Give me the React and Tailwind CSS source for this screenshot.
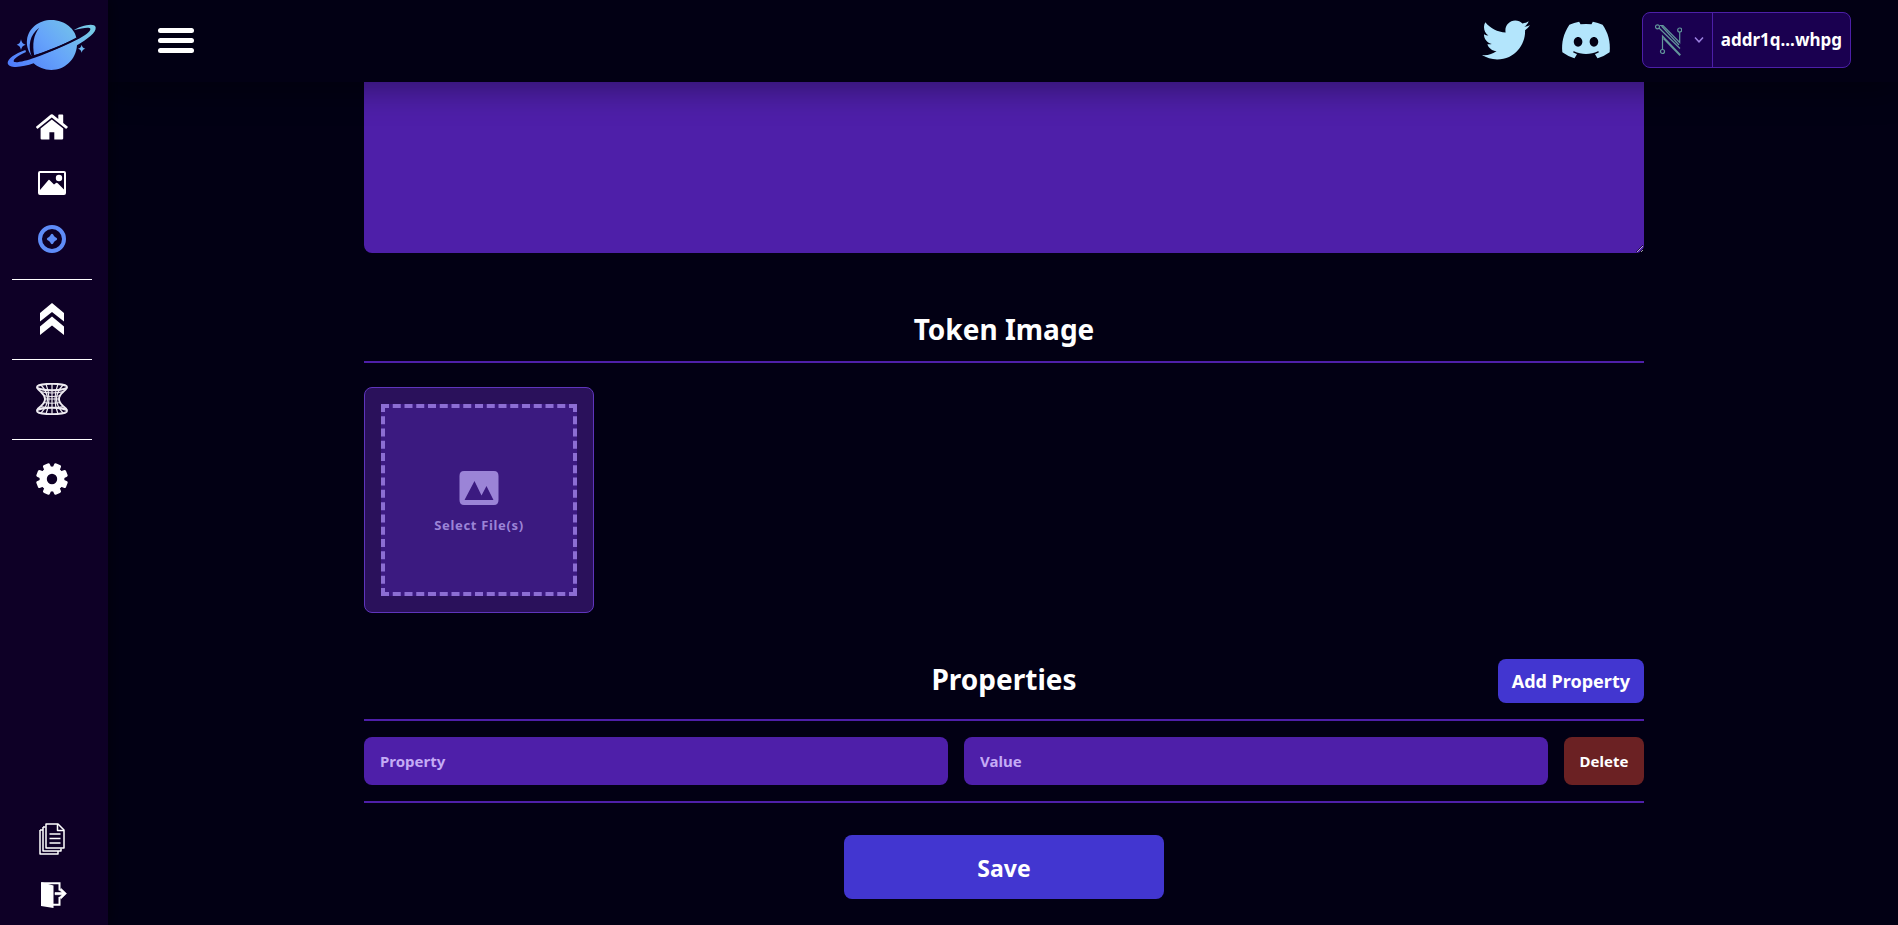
import { FaDiscord, FaTwitter } from "react-icons/fa";

function PlanetLogo() {
  return (
    <svg viewBox="22 57 270 156" className="w-[90px] h-[52px]" aria-hidden="true">
      <defs>
        <linearGradient id="planet" x1="0" y1="0.8" x2="1" y2="0.3">
          <stop offset="0" stopColor="#4f7dfb" />
          <stop offset="0.5" stopColor="#66a4fa" />
          <stop offset="1" stopColor="#76c9e6" />
        </linearGradient>
      </defs>
      <path
        fill="url(#planet)"
        d="M155 60C197 60 228 90 230 115C190 134 140 155 96 168C84 152 80 134 82 120C86 84 118 60 155 60ZM24 189C24 177 45 161 77 150L79 156C57 165 41 177 42 184C44 191 80 182 105 173C150 158 195 137 230 120C256 107 274 94 272 86C270 80 247 84 222 91C240 79 284 66 288 82C291 98 262 118 232 136C229 180 195 210 155 210C134 210 115 202 102 190C70 202 26 207 24 189ZM64 118Q66 132 78 134Q66 137 64 150Q62 137 51 134Q62 132 64 118ZM246 134Q248 144 257 146Q248 148 246 158Q244 148 235 146Q244 144 246 134Z"
      />
      <path d="M119 83C90 103 84 139 96 169L104 167C97 132 102 104 119 83Z" fill="#0e0026" />
      <path d="M94 171C140 158 190 137 230 115" fill="none" stroke="#0e0026" strokeWidth="4" />
    </svg>
  );
}

function HomeIcon() {
  return (
    <svg viewBox="0 0 32 26" className="w-8 h-[26px]" fill="white" aria-hidden="true">
      <path d="M14.800 0.600Q15.800 -0.300 16.800 0.600L22.300 5V1.200Q22.300 0.500 23 0.500H26.500Q27.200 0.500 27.200 1.200V9L31.600 12.500Q32 13 31.600 13.500L30.600 14.600Q30.100 15 29.600 14.600L15.800 3.600L2 14.600Q1.500 15 1 14.600L0.200 13.500Q-0.200 13 0.300 12.500Z" />
      <path d="M15.800 5.400L27.200 14.500V24.500Q27.200 25.600 26 25.600H18.300V18.200H13.400V25.600H5.800Q4.600 25.600 4.600 24.500V14.500Z" />
    </svg>
  );
}

function PictureIcon() {
  return (
    <svg viewBox="0 0 28 24" className="w-7 h-6" aria-hidden="true">
      <rect x="1" y="1" width="26" height="22" rx="1" fill="none" stroke="white" strokeWidth="2" />
      <circle cx="21" cy="7" r="3.200" fill="white" />
      <path d="M2 22V19L10.500 9Q11 8.600 11.500 9L16 13.500L18 12Q19 11.500 20 12.500L26 18.500V22Z" fill="white" />
    </svg>
  );
}

function TokenIcon() {
  return (
    <svg viewBox="0 0 28 28" className="size-7" aria-hidden="true">
      <circle cx="14" cy="14" r="12" fill="none" stroke="#5f8cf8" strokeWidth="4" />
      <path d="M14 8.800Q15 8.800 16 11L17 12Q19.200 13 19.200 14Q19.200 15 17 16L16 17Q15 19.200 14 19.200Q13 19.200 12 17L11 16Q8.800 15 8.800 14Q8.800 13 11 12L12 11Q13 8.800 14 8.800Z" fill="#5f8cf8" />
    </svg>
  );
}

function RankIcon() {
  return (
    <svg viewBox="0 0 24 32" className="w-6 h-8" fill="white" aria-hidden="true">
      <path d="M12 0L24 10V18.500L12 9L0 18.500V10Z" />
      <path d="M12 13.500L24 23.500V32L12 22.500L0 32V23.500Z" />
    </svg>
  );
}

function WormholeIcon() {
  return (
    <svg viewBox="0 0 32 32" className="size-8" fill="none" stroke="#eeebf1" aria-hidden="true">
      <ellipse cx="16" cy="4" rx="15" ry="3.200" strokeWidth="1.900" />
      <ellipse cx="16" cy="28" rx="15" ry="3.200" strokeWidth="1.900" />
      <g strokeWidth="1.200">
        <path d="M1 4.500Q2 7 5 9Q13 16 5 23Q2 25 1 27.500M31 4.500Q30 7 27 9Q19 16 27 23Q30 25 31 27.500" strokeWidth="1.900" />
        <path d="M5 2Q18 16 5 30M10 1Q16 16 10 31M16 1V31M22 1Q16 16 22 31M27 2Q14 16 27 30" />
        <path d="M4 8.500Q16 11.500 28 8.500M7 12.500Q16 14.500 25 12.500M8 16H24M7 19.500Q16 21 25 19.500M4 23.500Q16 25.500 28 23.500" />
      </g>
    </svg>
  );
}

const TEETH = [22.5, 67.5, 112.5, 157.5, 202.5, 247.5, 292.5, 337.5];

function GearIcon() {
  return (
    <svg viewBox="0 0 32 32" className="size-8" aria-hidden="true">
      <circle cx="16" cy="16" r="8.800" fill="none" stroke="white" strokeWidth="7.200" />
      {TEETH.map((angle) => (
        <rect key={angle} x="12.300" y="0" width="7.400" height="8" rx="1.800" fill="white" transform={`rotate(${angle} 16 16)`} />
      ))}
    </svg>
  );
}

function DocumentsIcon() {
  return (
    <svg viewBox="0 0 26 32" className="w-[26px] h-8" fill="none" stroke="white" strokeWidth="1.500" strokeLinejoin="round" aria-hidden="true">
      <path d="M7 1H19L25 7V25H7Z" />
      <path d="M18.500 1V7.500H25" />
      <path d="M4 4V28H22V25.500M1 7V31H19V28.500M4 4H6.500M1 7H3.500" />
      <path d="M10.500 11H21.500M10.500 15.500H21.500M10.500 20H21.500" />
    </svg>
  );
}

function LogoutIcon() {
  return (
    <svg viewBox="0 0 28 26" className="w-7 h-[26px] ml-1" aria-hidden="true">
      <path d="M1 0L13.500 3.500V26L1 24Z" fill="white" />
      <path d="M2 1.200H19.500V8.500M19.500 15V22.800H13" fill="none" stroke="white" strokeWidth="2" />
      <path d="M15 10.500H22L19.500 8L21.200 6.500L26.500 11.600L21.200 16.700L19.500 15.200L22 12.700H15Z" fill="white" stroke="white" strokeWidth="0.600" />
    </svg>
  );
}

function WalletIcon() {
  return (
    <svg viewBox="0 0 27 32" className="w-[27px] h-8" fill="none" stroke="#62969b" strokeWidth="1.200" aria-hidden="true">
      <circle cx="2.500" cy="2.800" r="2" />
      <circle cx="24.700" cy="6" r="2" />
      <circle cx="7.500" cy="27.500" r="2" />
      <path d="M4 4L25 24.500" />
      <path d="M5 1.500H8L24.700 18.500V8M6.500 2L24 21" />
      <path d="M7.500 25.500V12L25.500 31M8.500 14.500L25 31.500" />
    </svg>
  );
}

function UploadImageIcon() {
  return (
    <svg viewBox="0 0 40 34" className="w-10 h-[34px]" aria-hidden="true">
      <path
        fillRule="evenodd"
        fill="#9b84d7"
        d="M5 0H35Q39.500 0 39.500 5V29Q39.500 34 35 34H5Q.5 34 .5 29V5Q.5 0 5 0ZM5.500 29H34.500L27.500 15L22.500 24.500L15.500 10Z"
      />
    </svg>
  );
}

function NavItem({ label, children }) {
  return (
    <a href="#" aria-label={label} className="flex h-14 w-full items-center justify-center text-white">
      {children}
    </a>
  );
}

function Divider() {
  return <hr className="mt-3 mb-[11px] w-20 border-t border-white" />;
}

function Sidebar() {
  return (
    <aside className="sticky top-0 z-20 flex h-screen w-[108px] shrink-0 flex-col items-center bg-[#0e0026] pr-1 pb-0.5 shadow-[0_0_15px_rgba(0,0,0,0.6)]">
      <a href="#" aria-label="Home page" className="flex h-[99px] items-start pt-[19px]">
        <PlanetLogo />
      </a>
      <nav className="flex w-full grow flex-col items-center">
        <NavItem label="Home"><HomeIcon /></NavItem>
        <NavItem label="Gallery"><PictureIcon /></NavItem>
        <NavItem label="Tokens"><TokenIcon /></NavItem>
        <Divider />
        <NavItem label="Rank"><RankIcon /></NavItem>
        <Divider />
        <NavItem label="Wormhole"><WormholeIcon /></NavItem>
        <Divider />
        <NavItem label="Settings"><GearIcon /></NavItem>
      </nav>
      <NavItem label="Documents"><DocumentsIcon /></NavItem>
      <NavItem label="Log out"><LogoutIcon /></NavItem>
    </aside>
  );
}

function Header() {
  return (
    <header className="sticky top-0 z-10 flex h-[82px] items-center justify-between bg-[#020014] pr-[47px] pb-0.5 pl-[50px] shadow-[0_8px_32px_rgba(0,0,0,0.35)]">
      <button type="button" aria-label="Menu" className="flex w-9 flex-col gap-[5px]">
        <span className="h-[5px] rounded-full bg-white" />
        <span className="h-[5px] rounded-full bg-white" />
        <span className="h-[5px] rounded-full bg-white" />
      </button>
      <div className="flex items-center gap-[30px] text-[#b3e5fc]">
        <a href="#" aria-label="Twitter"><FaTwitter className="size-12" /></a>
        <a href="#" aria-label="Discord"><FaDiscord className="size-[52px]" /></a>
        <div className="flex h-14 items-stretch rounded-lg border border-[#4c1fa8] bg-[#1a0050]">
          <button type="button" aria-label="Wallet" className="flex items-center gap-3 border-r border-[#4c1fa8] pr-2 pl-3">
            <WalletIcon />
            <svg viewBox="0 0 10 6" className="w-2.5 h-1.5" fill="none" stroke="#9b7fe0" strokeWidth="1.500" aria-hidden="true">
              <path d="M1 0.500L5 4.800L9 0.500" />
            </svg>
          </button>
          <button type="button" className="px-2 text-[17px] font-bold text-white">addr1q...whpg</button>
        </div>
      </div>
    </header>
  );
}

export default function App() {
  return (
    <div className="flex min-h-screen bg-[#020014] font-['Noto_Sans','Segoe_UI',sans-serif] font-bold text-white">
      <Sidebar />
      <div className="min-w-0 grow">
        <Header />
        <div className="pl-0.5">
          <main className="mx-auto max-w-7xl pb-[26px]">
            <textarea aria-label="Description" className="block h-[171px] w-full resize-y rounded-b-lg bg-[#4e1fa9] p-4" />

            <section className="mt-14">
              <h2 className="border-b-2 border-[#4e1fa9] pb-3 text-center text-[28px] leading-10">Token Image</h2>
              <div className="mt-6 w-[230px] rounded-lg border border-[#5f35bd] bg-[#2a115b] p-4">
                <button type="button" className="flex h-48 w-full flex-col items-center justify-center gap-2 border-4 border-dashed border-[#8c6ed3] bg-[#3b1a80] pt-2 text-[13px] tracking-wider text-[#9b84d7]">
                  <UploadImageIcon />
                  <span className="leading-6">Select File(s)</span>
                </button>
              </div>
            </section>

            <section className="mt-[46px]">
              <div className="grid grid-cols-[1fr_auto_1fr] items-center border-b-2 border-[#4e1fa9] pb-4">
                <h2 className="col-start-2 pb-1 text-[28px] leading-10">Properties</h2>
                <button type="button" className="h-11 justify-self-end rounded-lg bg-[#4236d0] px-3.5 text-lg">Add Property</button>
              </div>
              <div className="flex gap-4 border-b-2 border-[#4e1fa9] py-4 text-[15px]">
                <input aria-label="Property" placeholder="Property" className="h-12 min-w-0 flex-1 rounded-lg bg-[#4e1fa9] px-4 placeholder:text-[#c4abf5]" />
                <input aria-label="Value" placeholder="Value" className="h-12 min-w-0 flex-1 rounded-lg bg-[#4e1fa9] px-4 placeholder:text-[#c4abf5]" />
                <button type="button" className="h-12 w-20 rounded-lg bg-[#6b2123]">Delete</button>
              </div>
            </section>

            <button type="submit" className="mx-auto mt-8 block h-16 w-80 rounded-lg bg-[#4236d0] pt-0.5 text-[23px]">Save</button>
          </main>
        </div>
      </div>
    </div>
  );
}
